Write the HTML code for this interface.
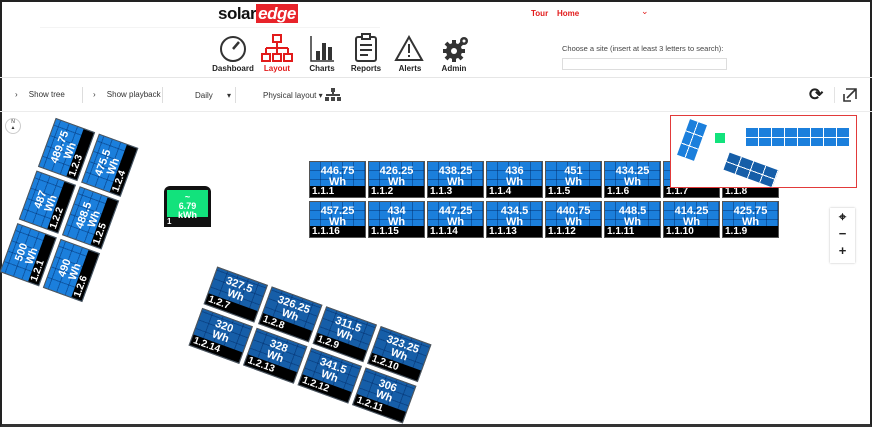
<!DOCTYPE html><html><head><style>
*{margin:0;padding:0;box-sizing:border-box}
body{width:872px;height:427px;overflow:hidden;background:#fff;font-family:"Liberation Sans",Arial,sans-serif;position:relative}
.frame{position:absolute;inset:0;border:2px solid #222;border-bottom:3px solid #333}
.a{position:absolute}
.p{position:absolute;width:57px;height:37px;background-color:#1b7fdc;border:1px solid #555;
background-image:repeating-linear-gradient(90deg,transparent 0 10px,rgba(0,40,100,.45) 10px 11px),repeating-linear-gradient(0deg,transparent 0 8px,rgba(0,40,100,.45) 8px 9px);color:#fff;font-weight:bold;font-size:11px;text-align:center;line-height:11px;padding-top:4px;overflow:hidden}
.p b{position:absolute;left:0;right:0;bottom:0;height:11px;background:#000;text-align:left;font-size:10px;line-height:11px;padding-left:2px}
.d{background-color:#165ea8}
.lab{font-size:8px;color:#222;font-weight:bold;text-align:center;width:50px}
.tb{font-size:8px;color:#333}
.l{width:52px;height:42px;padding-top:8px;transform:rotate(-90deg)}
</style></head><body>
<div class="frame"></div>
<div class="a" style="left:218px;top:4px;font-size:17px;font-weight:bold;letter-spacing:-0.5px;color:#111">solar<span style="background:#e8232a;color:#fff;padding:0 2px;font-style:italic">edge</span></div>
<div class="a" style="left:531px;top:9px;font-size:8px;color:#e21b1b;font-weight:bold">Tour</div>
<div class="a" style="left:557px;top:9px;font-size:8px;color:#e21b1b;font-weight:bold">Home</div>
<div class="a" style="left:641px;top:6px;font-size:9px;color:#e21b1b">&#8964;</div>
<div class="a" style="left:40px;top:27px;width:340px;height:1px;background:#f4f4f4"></div>
<svg class="a" style="left:219px;top:35px" width="28" height="28"><circle cx="14" cy="14" r="12" fill="none" stroke="#333" stroke-width="2"/><line x1="14" y1="14" x2="20" y2="7" stroke="#333" stroke-width="2.5"/></svg>
<svg class="a" style="left:261px;top:33px" width="32" height="30" fill="none" stroke="#e21b1b" stroke-width="2"><rect x="12" y="2" width="8" height="7"/><path d="M16 9v6M5 15h22M5 15v6M16 15v6M27 15v6"/><rect x="1" y="21" width="8" height="7"/><rect x="12" y="21" width="8" height="7"/><rect x="23" y="21" width="8" height="7"/></svg>
<svg class="a" style="left:309px;top:35px" width="26" height="28"><path d="M2 1v25h23" fill="none" stroke="#333" stroke-width="1.5"/><rect x="7" y="16" width="4" height="9" fill="#333"/><rect x="13" y="8" width="4" height="17" fill="#333"/><rect x="19" y="12" width="4" height="13" fill="#333"/></svg>
<svg class="a" style="left:354px;top:33px" width="24" height="30" fill="none" stroke="#333" stroke-width="2"><rect x="2" y="4" width="20" height="24" rx="2"/><rect x="8" y="1" width="8" height="5" fill="#fff"/><path d="M6 12h12M6 17h12M6 22h8"/></svg>
<svg class="a" style="left:394px;top:35px" width="30" height="27" fill="none" stroke="#333" stroke-width="2"><path d="M15 2L28 25H2Z"/><path d="M15 9v9M15 20v2"/></svg>
<svg class="a" style="left:442px;top:35px" width="28" height="28" fill="#333"><circle cx="12" cy="16" r="8"/><g stroke="#333" stroke-width="4"><path d="M12 5v22M1 16h22M4 8l16 16M20 8L4 24"/></g><circle cx="12" cy="16" r="3" fill="#fff"/><circle cx="22" cy="6" r="4"/><circle cx="22" cy="6" r="1.5" fill="#fff"/></svg>
<div class="a lab" style="left:208px;top:64px">Dashboard</div>
<div class="a lab" style="left:252px;top:64px;color:#e21b1b">Layout</div>
<div class="a lab" style="left:297px;top:64px">Charts</div>
<div class="a lab" style="left:341px;top:64px">Reports</div>
<div class="a lab" style="left:385px;top:64px">Alerts</div>
<div class="a lab" style="left:429px;top:64px">Admin</div>
<div class="a" style="left:562px;top:44px;font-size:7.5px;color:#444">Choose a site (insert at least 3 letters to search):</div>
<div class="a" style="left:562px;top:58px;width:165px;height:12px;border:1px solid #ddd"></div>
<div class="a" style="left:0;top:77px;width:872px;height:1px;background:#e6e6e6"></div>
<div class="a tb" style="left:15px;top:90px">&#8250;&nbsp;&nbsp;&nbsp;&nbsp; Show tree</div>
<div class="a" style="left:82px;top:87px;width:1px;height:16px;background:#ddd"></div>
<div class="a tb" style="left:93px;top:90px">&#8250;&nbsp;&nbsp;&nbsp;&nbsp; Show playback</div>
<div class="a" style="left:162px;top:87px;width:1px;height:16px;background:#ddd"></div>
<div class="a tb" style="left:195px;top:91px">Daily</div>
<div class="a tb" style="left:227px;top:91px">&#9662;</div>
<div class="a" style="left:235px;top:87px;width:1px;height:16px;background:#ddd"></div>
<div class="a tb" style="left:263px;top:91px">Physical layout &#9662;</div>
<svg class="a" style="left:325px;top:88px" width="16" height="14" fill="#444"><rect x="6" y="0" width="4" height="4"/><rect x="7" y="4" width="2" height="3"/><rect x="1" y="6" width="14" height="2"/><rect x="0" y="9" width="4" height="4"/><rect x="6" y="9" width="4" height="4"/><rect x="12" y="9" width="4" height="4"/></svg>
<div class="a" style="left:809px;top:85px;font-size:17px;font-weight:bold;color:#222">&#10227;</div>
<div class="a" style="left:834px;top:87px;width:1px;height:16px;background:#e3e3e3"></div>
<svg class="a" style="left:843px;top:88px" width="14" height="14" fill="none" stroke="#333" stroke-width="1.6"><path d="M3 1h10v10M13 1L4 10M1 6v7h7"/></svg>
<div class="a" style="left:0;top:111px;width:872px;height:1px;background:#ececec"></div>
<div class="a" style="left:5px;top:118px;width:16px;height:16px;border:1px solid #ccc;border-radius:50%;font-size:5px;text-align:center;color:#333">N<br>&#9650;</div>
<div class="p" style="left:309px;top:161px">446.75<br>Wh<b>1.1.1</b></div>
<div class="p" style="left:368px;top:161px">426.25<br>Wh<b>1.1.2</b></div>
<div class="p" style="left:427px;top:161px">438.25<br>Wh<b>1.1.3</b></div>
<div class="p" style="left:486px;top:161px">436<br>Wh<b>1.1.4</b></div>
<div class="p" style="left:545px;top:161px">451<br>Wh<b>1.1.5</b></div>
<div class="p" style="left:604px;top:161px">434.25<br>Wh<b>1.1.6</b></div>
<div class="p" style="left:663px;top:161px">&nbsp;<br>&nbsp;<b>1.1.7</b></div>
<div class="p" style="left:722px;top:161px">&nbsp;<br>&nbsp;<b>1.1.8</b></div>
<div class="p" style="left:309px;top:201px">457.25<br>Wh<b>1.1.16</b></div>
<div class="p" style="left:368px;top:201px">434<br>Wh<b>1.1.15</b></div>
<div class="p" style="left:427px;top:201px">447.25<br>Wh<b>1.1.14</b></div>
<div class="p" style="left:486px;top:201px">434.5<br>Wh<b>1.1.13</b></div>
<div class="p" style="left:545px;top:201px">440.75<br>Wh<b>1.1.12</b></div>
<div class="p" style="left:604px;top:201px">448.5<br>Wh<b>1.1.11</b></div>
<div class="p" style="left:663px;top:201px">414.25<br>Wh<b>1.1.10</b></div>
<div class="p" style="left:722px;top:201px">425.75<br>Wh<b>1.1.9</b></div>
<!-- left group: cells 42w x 52h -->
<div class="a" style="left:25px;top:128px;width:88px;height:164px;transform:rotate(20deg)">
<div class="p l" style="left:-5px;top:5px">489.75<br>Wh<b>1.2.3</b></div>
<div class="p l" style="left:41px;top:5px">475.5<br>Wh<b>1.2.4</b></div>
<div class="p l" style="left:-5px;top:61px">487<br>Wh<b>1.2.2</b></div>
<div class="p l" style="left:41px;top:61px">488.5<br>Wh<b>1.2.5</b></div>
<div class="p l" style="left:-5px;top:117px">500<br>Wh<b>1.2.1</b></div>
<div class="p l" style="left:41px;top:117px">490<br>Wh<b>1.2.6</b></div>
</div>
<div class="a" style="left:164px;top:186px;width:47px;height:41px;background:#111;border-radius:6px 6px 0 0;padding:4px 3px 0">
<div style="background:#12e27c;height:27px;color:#fff;font-weight:bold;font-size:9px;text-align:center;line-height:9px;padding-top:3px">~<br>6.79<br>kWh</div>
<div style="color:#fff;font-size:8px;font-weight:bold">1</div></div>
<div class="a" style="left:196px;top:303px;width:228px;height:84px;transform:rotate(20deg)">
<div class="p d" style="left:0;top:0;width:54px;height:40px">327.5<br>Wh<b>1.2.7</b></div>
<div class="p d" style="left:58px;top:0;width:54px;height:40px">326.25<br>Wh<b>1.2.8</b></div>
<div class="p d" style="left:116px;top:0;width:54px;height:40px">311.5<br>Wh<b>1.2.9</b></div>
<div class="p d" style="left:174px;top:0;width:54px;height:40px">323.25<br>Wh<b>1.2.10</b></div>
<div class="p d" style="left:0;top:44px;width:54px;height:40px">320<br>Wh<b>1.2.14</b></div>
<div class="p d" style="left:58px;top:44px;width:54px;height:40px">328<br>Wh<b>1.2.13</b></div>
<div class="p d" style="left:116px;top:44px;width:54px;height:40px">341.5<br>Wh<b>1.2.12</b></div>
<div class="p d" style="left:174px;top:44px;width:54px;height:40px">306<br>Wh<b>1.2.11</b></div>
</div>
<div class="a" style="left:670px;top:115px;width:187px;height:73px;border:1.5px solid #e23a3a;background:#fff">
<div class="a" style="left:12px;top:5px;width:18px;height:38px;background:#1b7fdc;transform:rotate(20deg);background-image:linear-gradient(90deg,transparent 8px,#fff 8px 9px,transparent 9px),repeating-linear-gradient(0deg,transparent 0 12px,#fff 12px 13px)"></div>
<div class="a" style="left:44px;top:17px;width:10px;height:10px;background:#12e27c"></div>
<div class="a" style="left:75px;top:12px;width:103px;height:18px;background:#1b7fdc;background-image:repeating-linear-gradient(90deg,transparent 0 12px,#fff 12px 13px),linear-gradient(0deg,transparent 8px,#fff 8px 9px,transparent 9px)"></div>
<div class="a" style="left:54px;top:45px;width:52px;height:18px;background:#165ea8;transform:rotate(20deg);background-image:repeating-linear-gradient(90deg,transparent 0 12px,#fff 12px 13px),linear-gradient(0deg,transparent 8px,#fff 8px 9px,transparent 9px)"></div>
</div>
<div class="a" style="left:830px;top:208px;width:25px;height:55px;background:#fff;box-shadow:0 0 2px #bbb;text-align:center;font-weight:bold;font-size:13px;line-height:17px;color:#222">&#8982;<br>&minus;<br>+</div>
</body></html>
